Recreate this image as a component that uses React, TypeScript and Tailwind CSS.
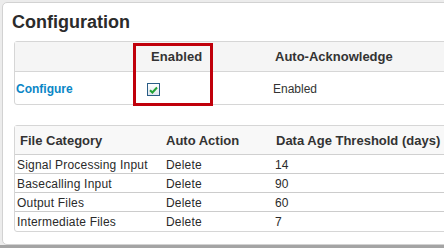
import React from "react";

const font = { fontFamily: '"Liberation Sans", Arial, sans-serif' };

function Checkbox() {
  return (
    <div className="w-[13px] h-[13px] border border-[#2a5d86] bg-gradient-to-b from-white to-[#dfe6ee] flex items-center justify-center">
      <svg width="9" height="8" viewBox="0 0 9 8">
        <path d="M1 4.2 L3.4 6.5 L8 1.5" stroke="#22a336" strokeWidth="2" fill="none" />
      </svg>
    </div>
  );
}

const rows2 = [
  ["Signal Processing Input", "Delete", "14"],
  ["Basecalling Input", "Delete", "90"],
  ["Output Files", "Delete", "60"],
  ["Intermediate Files", "Delete", "7"],
];

export default function App() {
  return (
    <div className="w-[444px] h-[248px] overflow-hidden bg-[#ececec] flex flex-col text-[#333]" style={font}>
      <div className="h-[245px] pl-[2px] pt-[2px] overflow-hidden">
        <div className="w-[470px] h-[243px] bg-white border border-[#d2d2d2] rounded-l-[5px] pt-[8px] pl-[11px]">
          <div className="text-[18px] leading-[22px] font-bold text-[#2b2b2b] -ml-[2px]">Configuration</div>

          {/* Table 1 */}
          <div className="relative mt-[8px] w-[470px] border border-[#d6d6d6] rounded-l-[3px]">
            <div className="grid grid-cols-[119px_79px_1fr] h-[30px] bg-[#f5f5f5] border-b border-[#d6d6d6] text-[13px] font-bold items-center">
              <div />
              <div className="pl-[17px] tracking-[0.1px]">Enabled</div>
              <div className="pl-[62px]">Auto-Acknowledge</div>
            </div>
            <div className="grid grid-cols-[119px_79px_1fr] h-[32px] pt-[2px] items-center text-[12px]">
              <div className="pl-[1px] font-bold text-[#0a86c6]">Configure</div>
              <div className="pl-[13px] pt-[1px]">
                <Checkbox />
              </div>
              <div className="pl-[60px]">Enabled</div>
            </div>
            <div className="absolute left-[118px] top-[1px] w-[80px] h-[63px] border-[3px] border-[#c0000b]" />
          </div>

          {/* Table 2 */}
          <div className="mt-[20px] w-[470px] border border-[#d6d6d6] rounded-l-[3px]">
            <div className="grid grid-cols-[150px_110px_1fr] h-[29px] pt-[1px] bg-[#f8f8f8] border-b border-[#d0d0d0] text-[13px] font-bold items-center">
              <div className="pl-[5px]">File Category</div>
              <div className="pl-[1px]">Auto Action</div>
              <div className="pl-[1px]">Data Age Threshold (days)</div>
            </div>
            {rows2.map((r) => (
              <div key={r[0]} className="grid grid-cols-[150px_110px_1fr] h-[19px] pt-[1px] border-b border-[#cccccc] last:border-b-0 text-[12px] items-center text-[#2a2a2a]">
                <div className="pl-[2px] tracking-[0.2px]">{r[0]}</div>
                <div className="pl-[1px] tracking-[0.2px]">{r[1]}</div>
                <div className="tracking-[0.2px]">{r[2]}</div>
              </div>
            ))}
          </div>
        </div>
      </div>
      <div className="h-[3px] bg-[#a4a4a4]" />
    </div>
  );
}
